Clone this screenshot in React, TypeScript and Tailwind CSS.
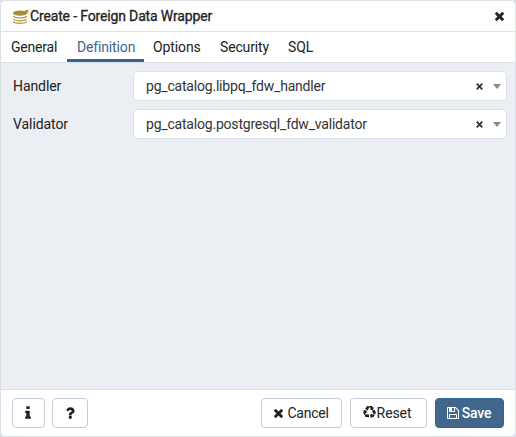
import type { ReactNode } from 'react';

const CLOSE =
  'M1490 1322q0 40-28 68l-136 136q-28 28-68 28t-68-28l-294-294-294 294q-28 28-68 28t-68-28l-136-136q-28-28-28-68t28-68l294-294-294-294q-28-28-28-68t28-68l136-136q28-28 68-28t68 28l294 294 294-294q28-28 68-28t68 28l136 136q28 28 28 68t-28 68l-294 294 294 294q28 28 28 68z';
const INFO =
  'M1216 1344v128q0 26-19 45t-45 19h-512q-26 0-45-19t-19-45v-128q0-26 19-45t45-19h64v-384h-64q-26 0-45-19t-19-45v-128q0-26 19-45t45-19h384q26 0 45 19t19 45v576h64q26 0 45 19t19 45zm-128-1152v192q0 26-19 45t-45 19h-256q-26 0-45-19t-19-45v-192q0-26 19-45t45-19h256q26 0 45 19t19 45z';
const QUESTION =
  'M1088 1256v240q0 16-12 28t-28 12h-240q-16 0-28-12t-12-28v-240q0-16 12-28t28-12h240q16 0 28 12t12 28zm316-600q0 54-15.5 101t-35 76.5-55 59.5-57.5 43.5-61 35.5q-41 23-68.5 65t-27.5 67q0 17-12 32.5t-28 15.5h-240q-15 0-25.5-18.5t-10.5-37.5v-45q0-83 65-156.5t143-108.5q59-27 84-56t25-76q0-42-46.5-74t-107.5-32q-65 0-108 29-35 25-107 115-13 16-31 16-12 0-25-8l-164-125q-13-10-15.5-25t5.5-28q160-266 464-266 80 0 161 31t146 83 106 127.5 41 158.5z';
const FLOPPY =
  'M384 1536h768v-384h-768v384zM1280 1536h128v-896q0-14-10-38.5t-20-34.5l-281-281q-10-10-34-20t-39-10v416q0 40-28 68t-68 28h-576q-40 0-68-28t-28-68v-416h-128v1280h128v-416q0-40 28-68t68-28h832q40 0 68 28t28 68v416zM896 608v-320q0-13-9.5-22.5t-22.5-9.5h-192q-13 0-22.5 9.5t-9.5 22.5v320q0 13 9.5 22.5t22.5 9.5h192q13 0 22.5-9.5t9.5-22.5zM1536 640v928q0 40-28 68t-68 28h-1344q-40 0-68-28t-28-68v-1344q0-40 28-68t68-28h928q40 0 88 20t76 48l280 280q28 28 48 76t20 88z';
const RECYCLE =
  'M836 1169l-15 368-2 22-420-29q-36-3-67-31.5t-47-65.5q-11-27-14.5-55t4-65 12-55 21.5-64 19-53q78 12 509 28zm-387-586l180 379-147-92q-63 72-111.5 144.5t-72.5 125-39.5 94.5-18.5 63l-4 21-190-357q-17-26-18-56t6-47l8-18q35-63 114-188l-140-86zm1231 517l-188 359q-12 29-36.5 46.5t-43.5 20.5l-18 4q-71 7-219 12l8 164-230-367 211-362 7 173q170 16 283 5t170-33zm-785-924q-47 63-265 435l-317-187-19-12 225-356q20-31 60-45t80-10q24 2 48.5 12t42 21 41.5 33 36 34.5 36 39.5 32 35zm655 307l212 363q18 37 12.5 76t-27.5 74q-13 20-33 37t-38 28-48.5 22-47 16-51.5 14-46 12q-34-72-265-436l313-195zm-143-226l142-83-220 373-419-20 151-86q-34-89-75-166t-75.5-123.5-64.5-80-47-46.5l-17-13 405 1q31-3 58 10.5t39 28.5l11 15q39 61 112 190z';

function Glyph({ d, className, box = '0 0 1792 1792' }: { d: string; className: string; box?: string }) {
  return (
    <svg viewBox={box} className={className} fill="currentColor">
      <path d={d} />
    </svg>
  );
}

function WrapperIcon() {
  return (
    <svg viewBox="0 0 16 16" className="h-4 w-4 shrink-0" fill="none">
      <ellipse cx="7" cy="5.2" rx="7" ry="2.6" fill="#a98f35" />
      <path d="M.4 8c.6 2.5 12.6 2.5 13.2 0" stroke="#b9a352" strokeWidth="1.4" />
      <path d="M.4 10.8c.6 2.5 12.6 2.5 13.2 0" stroke="#b9a352" strokeWidth="1.4" />
      <path d="M.4 13.4c.6 2.5 12.6 2.5 13.2 0" stroke="#b9a352" strokeWidth="1.4" />
      <path d="M11.6 2h3.6v3.6z" fill="#a98f35" />
      <path d="M11 5.2l2.6-2.2" stroke="#a98f35" strokeWidth="1.2" />
    </svg>
  );
}

function SelectRow({ label, value }: { label: string; value: string }) {
  return (
    <div className="flex h-[30px] items-center">
      <div className="w-[120px] tracking-[-0.08px]">{label}</div>
      <div className="flex h-[30px] w-[374px] items-center rounded-[4px] border border-[#dde0e6] bg-white pl-3 text-[#333]">
        <span className="grow tracking-[-0.2px]">{value}</span>
        <svg viewBox="0 0 7 7" className="mr-[10px] h-[7px] w-[7px]">
          <path d="M.7.7l5.6 5.6M6.3.7L.7 6.3" stroke="#333" strokeWidth="1.8" />
        </svg>
        <svg viewBox="0 0 8 5" className="mr-[5px] mt-px h-[5px] w-2">
          <path d="M0 0h8L4 5z" fill="#888" />
        </svg>
      </div>
    </div>
  );
}

function Button({ className, children }: { className: string; children: ReactNode }) {
  return (
    <button className={`flex h-[30px] shrink-0 items-center justify-center rounded-[4px] border ${className}`}>
      {children}
    </button>
  );
}

const TABS = [
  { name: 'General', box: 'w-[66px] pl-[10px] tracking-[-0.2px]' },
  { name: 'Definition', box: 'w-[77px] border-b-[3px] border-[#326690] pl-[10px] text-[#3d6590] tracking-[-0.15px]' },
  { name: 'Options', box: 'w-[66px] pl-[9px] tracking-[-0.1px]' },
  { name: 'Security', box: 'w-[68px] pl-[10px] tracking-[-0.15px]' },
  { name: 'SQL', box: 'w-[50px] pl-[10px] tracking-[-0.15px]' },
];

export default function App() {
  return (
    <div className="h-[437px] w-[516px] bg-[#dde0e6] font-[Roboto,sans-serif] text-[14px] leading-5 text-[#222]">
      <div className="flex h-[437px] w-[516px] flex-col overflow-hidden rounded-[5px] border border-[#dde0e6] bg-white">
        <header className="flex h-[31px] shrink-0 items-center border-b border-[#dde0e6] pl-3 pr-[11px]">
          <WrapperIcon />
          <span className="ml-[1px] grow tracking-[-0.15px] [-webkit-text-stroke:0.3px_#222]">
            Create - Foreign Data Wrapper
          </span>
          <Glyph d={CLOSE} box="302 238 1188 1316" className="h-[10px] w-[9px]" />
        </header>
        <nav className="flex h-[31px] shrink-0 border-b border-[#dde0e6]">
          {TABS.map((t) => (
            <div key={t.name} className={`h-[30px] pt-[5px] ${t.box}`}>
              {t.name}
            </div>
          ))}
        </nav>
        <main className="flex grow flex-col gap-2 bg-[#ebeef3] pl-3 pt-2">
          <SelectRow label="Handler" value="pg_catalog.libpq_fdw_handler" />
          <SelectRow label="Validator" value="pg_catalog.postgresql_fdw_validator" />
        </main>
        <footer className="flex h-[47px] shrink-0 items-center border-t border-[#dde0e6] pl-[11px] pr-[11px]">
          <Button className="w-[33px] border-[#c4cad6] bg-white pr-px">
            <Glyph d={INFO} className="h-4 w-4" />
          </Button>
          <Button className="ml-[7px] w-9 border-[#c4cad6] bg-white">
            <Glyph d={QUESTION} className="h-4 w-4" />
          </Button>
          <div className="grow" />
          <Button className="w-[81px] gap-1 border-[#c4cad6] bg-white tracking-[-0.25px]">
            <Glyph d={CLOSE} box="302 238 1188 1316" className="h-[10px] w-[9px]" />
            Cancel
          </Button>
          <Button className="ml-2 w-[77px] gap-[1px] border-[#c4cad6] bg-white pr-[3px] tracking-[-0.1px]">
            <Glyph d={RECYCLE} className="mb-0.5 h-[13px] w-[13px]" />
            Reset
          </Button>
          <Button className="ml-2 w-[69px] gap-[3px] border-[#326690] bg-[#41678d] pr-px font-medium text-white tracking-[-0.2px]">
            <Glyph d={FLOPPY} box="0 128 1536 1536" className="h-3 w-3" />
            Save
          </Button>
        </footer>
      </div>
    </div>
  );
}
